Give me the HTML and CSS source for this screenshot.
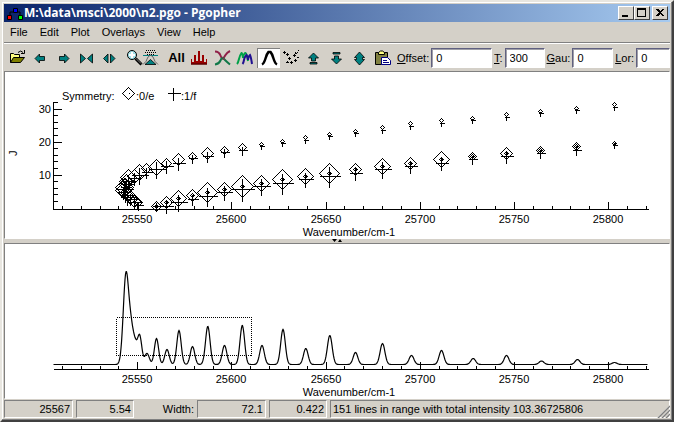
FILE: index.html
```
<!DOCTYPE html>
<html lang="en">
<head>
<meta charset="UTF-8" />
<meta name="viewport" content="width=device-width, initial-scale=1.0" />
<title>M:\data\msci\2000\n2.pgo - Pgopher</title>
<link rel="stylesheet" href="styles.css">
</head>
<body>
<div class="window">
  <header class="titlebar">
    <svg class="app-icon" viewBox="0 0 16 14" width="16" height="14"><path d="M3 9V6h3M10 6h3v3" stroke="#000" fill="none"/><path fill="#00f" stroke="#000" d="M6.500 2.500h4v4h-4z"/><path fill="red" stroke="#000" d="M.5 9.500h4v4h-4z"/><path fill="#0f0" stroke="#000" d="M11.500 9.500h4v4h-4z"/></svg>
    <h1>M:\data\msci\2000\n2.pgo - Pgopher</h1>
    <button class="caption" aria-label="Minimize"><svg viewBox="0 0 12 10" width="12" height="10"><path d="M2 7h6v2H2z"/></svg></button>
    <button class="caption" aria-label="Maximize"><svg viewBox="0 0 12 10" width="12" height="10"><path fill-rule="evenodd" d="M1 0h9v9H1zM2 2v6h7V2z"/></svg></button>
    <button class="caption close" aria-label="Close"><svg viewBox="0 0 12 10" width="12" height="10"><path d="M2 1h2l2 2 2-2h2L7 4.500 10 8H8L6 6 4 8H2l3-3.500z"/></svg></button>
  </header>

  <nav class="menu">
    <button>File</button>
    <button>Edit</button>
    <button>Plot</button>
    <button>Overlays</button>
    <button>View</button>
    <button>Help</button>
  </nav>

  <div class="toolbar">
    <button aria-label="Open"><svg viewBox="0 0 23 20"><path d="M6.500 14.500v-9h3l1 1h5v3" fill="#ffff80" stroke="#000"/><path d="M6.500 14.500l3-5h11l-4 5z" fill="#808000" stroke="#000"/><path d="M14 4.500q3-3 5 0M20.500 2v3.500H17" fill="none" stroke="#000"/></svg></button>
    <button aria-label="Left"><svg viewBox="0 0 23 20"><path class="teal" d="M8 10.500l4.500-4.500v2.500h5v4h-5V15z"/></svg></button>
    <button aria-label="Right"><svg viewBox="0 0 23 20"><path class="teal" d="M19 10.500l-4.500-4.500v2.500h-5v4h5V15z"/></svg></button>
    <button aria-label="Compress"><svg viewBox="0 0 23 20"><path class="teal" d="M7.500 6v9l5-4.500zM19.500 6v9l-5-4.500z"/></svg></button>
    <button aria-label="Expand"><svg viewBox="0 0 23 20"><path class="teal" d="M12 6v9l-4.500-4.500zM14.500 6v9l4.500-4.500z"/></svg></button>
    <button aria-label="Zoom"><svg viewBox="0 0 23 20"><path d="M16.500 10.500l6 6" stroke="#000" stroke-width="3"/><path d="M17 10.500l5 5" stroke="#808080"/><circle cx="13" cy="7" r="4.500" fill="#a0e0e8" stroke="#000"/><path d="M13 4v6M10 7h6" stroke="#fff" stroke-width="2"/></svg></button>
    <button aria-label="Scale to peak"><svg viewBox="0 0 23 20"><path d="M4 2.500h9M3 4.500h11M5 6.500h8" stroke="#000" stroke-dasharray="1 1"/><path d="M1 7.500h15" stroke="#008080"/><path d="M1 16.500Q4.500 14 6 9l2.500-2L11 9q1.500 5 5 7.500" fill="none" stroke="#666"/><path class="teal" d="M3 16.500l5.500-5 5.500 5z"/></svg></button>
    <button class="all">All</button>
    <button aria-label="Simulate"><svg viewBox="0 0 23 20"><path d="M3 16.500V11h1v3h2V7h2v6h2V3h2v10h2V7h2v7h2v-3h1v5.500z" fill="#900"/><path d="M3 16h16" stroke="#400000"/></svg></button>
    <button aria-label="Cross"><svg viewBox="0 0 23 20" fill="none"><path d="M4 3.500q4 0 5.500 4t2.500 3 2.500-3.500T19 3" stroke="#902048" stroke-width="2"/><path d="M4 16.500q4-.5 5.500-4T12 10t2.500 2.500 4.500 4" stroke="#107848" stroke-width="2"/><path d="M11 9l3 3" stroke="#902048"/></svg></button>
    <button aria-label="Overlay"><svg viewBox="0 0 23 20" fill="none"><path d="M3 16q1-1 2-5t2.500-6q1 0 1.500 5 1-5 2.500-5Q13 6 14 13" stroke="#00a048" stroke-width="2"/><path d="M8.500 16q1-1 1.500-4t2.500-5q1 1 1.500 5 .5-4 2-5Q17 9 18 16" stroke="#201090" stroke-width="2"/></svg></button>
    <button class="pressed" aria-label="Show curve"><svg viewBox="0 0 23 20"><path d="M5 16.500q2-1 3.500-6t3-6.500h2q1.500 1.500 3 6.500t3.500 6" fill="none" stroke="#000" stroke-width="2.500"/></svg></button>
    <button aria-label="Fortrat"><svg viewBox="0 0 23 20"><g shape-rendering="crispEdges"><path d="M4 3h1v1h1v1H5v1H4V5H3V4h1zM6 6h3v1H6zM7 5h1v3H7zM8 10h3v1H8zM9 9h1v3H9zM10 14h3v1h-3zM11 13h1v3h-1zM14 12h3v1h-3zM15 11h1v3h-1zM15 4h1v1h1V4h1v1h-1v1h-2zM13 7h3v1h-3zM14 6h1v3h-1zM7 13h1v1H7zM6 14h3v1H6zM17 9h2v1h-2zM18 2h1v1h-1z"/></g></svg></button>
    <button aria-label="Up"><svg viewBox="0 0 23 20"><path class="teal" d="M10.500 5l5 5h-3v3h-4v-3h-3zM7 14.500h7v1.500H7z"/></svg></button>
    <button aria-label="Down"><svg viewBox="0 0 23 20"><path class="teal" d="M10.500 16l-5-5h3V8h4v3h3zM7 4.500h7V6H7z"/></svg></button>
    <button aria-label="Scale"><svg viewBox="0 0 23 20"><path class="teal" d="M10.500 4l5 5.500h-2v2h2l-5 5.500-5-5.500h2v-2h-2z"/></svg></button>
    <button aria-label="Paste"><svg viewBox="0 0 23 20"><path d="M3.500 4.500h12v12h-12z" fill="#808040" stroke="#000"/><path d="M6.500 6.500v-2l2-1.500h2l2 1.500v2z" fill="#ffff80" stroke="#000"/><path d="M9.500 9.500h6l3 3v4h-9z" fill="#fff" stroke="#000080"/><path d="M11 12.500h4M11 14.500h6" stroke="#000080"/></svg></button>

    <label for="offset"><u>O</u>ffset:</label><input id="offset" class="offset" value="0">
    <label for="temp"><u>T</u>:</label><input id="temp" class="temp" value="300">
    <label for="gau"><u>G</u>au:</label><input id="gau" class="gau" value="0">
    <label for="lor"><u>L</u>or:</label><input id="lor" class="lor" value="0">
  </div>

  <main>
    <section class="panel"><svg id="fortrat" class="plot" viewBox="5 72 664 166"></svg></section>
    <div class="splitter"><svg viewBox="0 0 10 4" width="10" height="4"><path d="M0 0h5L2.500 3zM6 3h4L8 0z"/></svg></div>
    <section class="panel"><svg id="spectrum" class="plot" viewBox="5 244 664 154"></svg></section>
  </main>

  <footer class="status">
    <output class="cell wide">25567</output>
    <output class="cell">5.54</output>
    <span class="caption-text">Width:</span>
    <output class="cell wide">72.1</output>
    <output class="cell">0.422</output>
    <output class="cell message">151 lines in range with total intensity 103.36725806</output>
    <svg class="grip" viewBox="0 0 13 13" width="13" height="13"><path d="M0 13L13 0M4 13l9-9M8 13l5-5" stroke="#fff"/><path d="M1 13L13 1M5 13l8-8M9 13l4-4" stroke="#808080" stroke-width="1.500"/></svg>
  </footer>
</div>

<script>
/* ------------ DATA ------------- */
// x, diamond y, diamond size, plus y, plus size
const upper = [
  [614,104,2,107,2],[576,108,2,110,2],[540,111,2,113,2],[506,114,2,117,2],[472,118,2,120,2],
  [441,120,2,123,2],[410,123,2,126,2],[382,127,2,130,2],[355,131,2,133,2],[329,134,2,136,2],
  [305,137,2,140,2],[282,141,2,143,2],[261,144,2,146,2],[242,147,4,150,4],[224,150,4,152,4],
  [207,153,6,156,5],[192,156,4,158,4],[178,159,6,163,6],[166,163,5,166,6],[156,167,8,169,8],
  [146,168,5,172,5],[139,172,8,175,8],[134,176,7,178,6],[128,177,8,181,6],[126,181,7,184,6],
  [125,184,6,187,5],[124,187,9,189,8],[123,190,8,192,6],[125,193,6,195,6],[127,195,6,197,7],
  [130,197,7,199,5],[134,201,6,202,6],[138,202,4,205,4]
];
const lower = [
  [156,206,5,206,4],[166,202,6,206,6],[178,198,8,202,8],[192,195,6,199,5],[207,192,10,196,9],
  [224,189,7,192,7],[242,186,11,189,11],[261,183,8,186,8],[282,179,10,183,10],[305,176,8,179,7],
  [329,173,10,176,10],[355,169,6,173,6],[382,166,8,169,8],[410,163,6,166,6],[441,159,8,163,6],
  [472,156,4,159,4],[506,153,6,156,6],[540,150,4,153,4],[576,146,4,150,4],[614,143,2,145,2]
];
// x, height, width
const peaks = [
  [125.5,90,2.7],[130.5,30,2.3],[134.5,18,2.2],[139.2,28,2.1],[146.5,11,2.3],[156,26,2.1],[166.5,15,2.2],[178.5,34,2.2],
  [192,18,2.2],[207.3,38,2.3],[224,19,2.3],[241.8,39,2.3],[261.5,19,2.3],[282.5,35,2.3],
  [305.3,16,2.3],[329.3,29,2.4],[355,12,2.3],[382,21,2.4],[411,9,2.4],[441,14,2.4],[472.7,6,2.4],
  [506,9,2.4],[541,3.5,2.4],[577,5,2.4],[614,2,2.4]
];

/* ------------ HELPERS ------------- */
const xpos = w => Math.round(137.3 + (w - 25550) * 1.883);
const line = (x1, y1, x2, y2) => `M${x1 + .5} ${y1 + .5}L${x2 + .5} ${y2 + .5}`;
const text = (x, y, s, anchor = "start") => `<text x="${x}" y="${y}" text-anchor="${anchor}">${s}</text>`;
const path = (d, cls) => `<path class="${cls}" d="${d}"/>`;

function diamond(x, y, r){
  return `M${x + .5} ${y - r + .5}l${r} ${r}l${-r} ${r}l${-r} ${-r}z`;
}
function plus(x, y, r){
  return line(x - r, y, x + r + 1, y) + line(x, y - r, x, y + r + 1);
}
function xaxis(y, major){
  let d = line(53, y, 648, y);
  let labels = "";
  for(let w = 25510; w <= 25820; w += 10){
    const x = xpos(w);
    const isMajor = w % 50 === 0;
    d += line(x, y - (isMajor ? major : 4), x, y);
    if(isMajor) labels += text(x, y + 14, w, "middle");
  }
  return path(d, "axis") + labels + text(349, y + 27, "Wavenumber/cm-1", "middle");
}

/* ------------ FORTRAT PLOT ------------- */
function drawFortrat(){
  let axis = line(53, 101, 53, 209);
  let labels = "";
  for(let j = 2; j <= 32; j += 2){
    const y = Math.round(207.5 - j * 3.3);
    axis += line(53, y, j % 10 ? 57 : 61, y);
    if(j % 10 === 0) labels += text(51, y + 4, j, "end");
  }
  let diamonds = diamond(128, 93, 6);
  let pluses = plus(173, 93, 6) + line(128, 93, 129, 93);
  upper.concat(lower).forEach(([x, dy, dr, py, pr]) => {
    diamonds += diamond(x, dy, dr);
    pluses += plus(x, py, pr);
  });
  lower.forEach(([x, dy]) => {
    diamonds += diamond(x, dy, 2);
    pluses += plus(x, dy, 1);
  });
  document.getElementById("fortrat").innerHTML =
    xaxis(209, 8) + path(axis, "axis") + path(diamonds, "diamond") + path(pluses, "axis") + labels +
    text(62, 100, "Symmetry:") + text(136, 100, ":0/e") + text(181, 100, ":1/f") +
    `<text transform="translate(17 156) rotate(-90)">J</text>`;
}

/* ------------ SPECTRUM ------------- */
function drawSpectrum(){
  let d = "";
  for(let x = 53; x <= 647; x += .5){
    const h = peaks.reduce((sum, [px, ph, pw]) => sum + ph * Math.exp(-((x - px) ** 2) / (2 * pw * pw)), 0);
    d += `${d ? "L" : "M"}${x + .5} ${(364.5 - h).toFixed(1)}`;
  }
  document.getElementById("spectrum").innerHTML =
    xaxis(369, 8) + path(d, "curve") +
    `<rect class="selection" x="116.5" y="317.5" width="135" height="38"/>`;
}

drawFortrat();
drawSpectrum();
</script>
</body>
</html>
```

FILE: styles.css
```
*{box-sizing:border-box;}
body{margin:0;background:#d4d0c8;color:#000;font-family:"Liberation Sans",Arial,sans-serif;font-size:11px;line-height:14px;}
button,input{font:inherit;color:inherit;}
.window{display:flex;flex-direction:column;min-height:100vh;padding:2px;border:2px solid;border-color:#e8e6e0 #404040 #404040 #e8e6e0;box-shadow:inset -1px -1px #808080,inset 1px 1px #fff;}
.titlebar{display:flex;align-items:center;height:18px;padding:0 2px;background:linear-gradient(90deg,#0a246a,#a6caf0);}
.app-icon{margin:0 1px;}
h1{flex:1;margin:0;color:#fff;font:bold 12px/18px "Open Sans","Noto Sans",sans-serif;white-space:nowrap;}
.caption{display:flex;align-items:center;justify-content:center;width:16px;height:14px;padding:0;background:#d4d0c8;border:1px solid;border-color:#fff #404040 #404040 #fff;}
.caption svg{flex:none;shape-rendering:crispEdges;}
.close{margin-left:2px;}
.menu{display:flex;height:21px;border-bottom:1px solid #808080;}
.menu button{padding:0 6px;border:0;background:none;}
.toolbar{display:flex;align-items:center;height:28px;padding-top:1px;border-top:1px solid #fff;white-space:nowrap;}
.toolbar button{flex:none;width:23px;height:20px;padding:0;border:0;background:none;}
.toolbar svg{display:block;width:23px;height:20px;overflow:visible;}
.toolbar .pressed{background:#fff;box-shadow:inset 1px 1px #808080;}
.toolbar .all{font-size:13px;font-weight:bold;}
.teal{fill:#008080;stroke:#000;stroke-width:.8;}
label{margin:0 2px;}
input{min-width:0;height:20px;padding:0 4px;border:1px solid;border-color:#606080 #fff #fff #606080;box-shadow:inset 1px 1px #a0a0a8;background:#fff;border-radius:0;outline:0;}
.offset{flex:66;}
.temp{flex:39;}
.gau{flex:40;}
.lor{flex:31;}
main{flex:1;}
.panel{border:1px solid;border-color:#808080 #fff #fff #808080;background:#fff;}
.plot{display:block;width:100%;font-size:11px;}
.axis,.curve,.diamond,.selection{fill:none;stroke:#000;}
.axis,.diamond,.selection{shape-rendering:crispEdges;}
.curve{stroke-width:1.2;}
.selection{stroke-dasharray:1 1;}
.splitter{display:flex;justify-content:center;height:4px;}
.status{display:flex;gap:3px;height:19px;padding-top:1px;}
.cell{width:58px;padding:0 2px;border:1px solid;border-color:#808080 #fff #fff #808080;line-height:16px;text-align:right;white-space:nowrap;}
.wide{width:69px;}
.caption-text{width:57px;text-align:right;line-height:18px;}
.message{flex:1;text-align:left;}
.grip{align-self:flex-end;margin-left:-16px;}
```
